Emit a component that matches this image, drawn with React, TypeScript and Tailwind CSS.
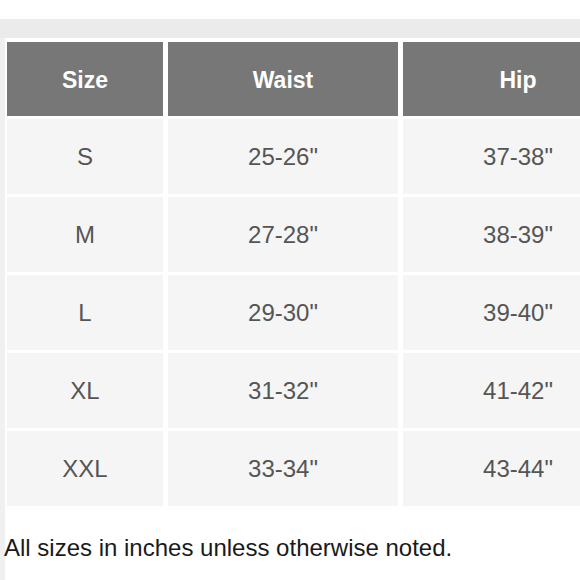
const rows: [string, string, string][] = [
  ["S", '25-26"', '37-38"'],
  ["M", '27-28"', '38-39"'],
  ["L", '29-30"', '39-40"'],
  ["XL", '31-32"', '41-42"'],
  ["XXL", '33-34"', '43-44"'],
];

export default function App() {
  return (
    <div
      className="w-[580px] h-[580px] bg-white overflow-hidden flex flex-col"
      style={{ fontFamily: '"Liberation Sans", Arial, sans-serif' }}
    >
      <div className="h-[19px] shrink-0" />
      <div className="h-[19px] shrink-0 bg-[#ebebeb]" />
      <div className="flex flex-1">
        <div className="w-[5px] shrink-0 bg-[#f0f0f0]" />
        <div className="flex flex-col pl-[2px] pt-[4px]">
          {/* Size table */}
          <div className="grid grid-cols-[156px_230px_230px] gap-x-[5px] gap-y-[3px]">
            {["Size", "Waist", "Hip"].map((h) => (
              <div
                key={h}
                className="h-[74px] pt-[3px] bg-[#777777] flex items-center justify-center text-white font-bold text-[23px]"
              >
                {h}
              </div>
            ))}
            {rows.map((r) =>
              r.map((c, i) => (
                <div
                  key={r[0] + i}
                  className="h-[75px] bg-[#f5f5f5] flex items-center justify-center text-[#555555] text-[24px]"
                >
                  {c}
                </div>
              ))
            )}
          </div>
          <p className="mt-[28px] -ml-[3px] text-[24px] leading-[28px] text-[#1a1a1a]">
            All sizes in inches unless otherwise noted.
          </p>
        </div>
      </div>
    </div>
  );
}
